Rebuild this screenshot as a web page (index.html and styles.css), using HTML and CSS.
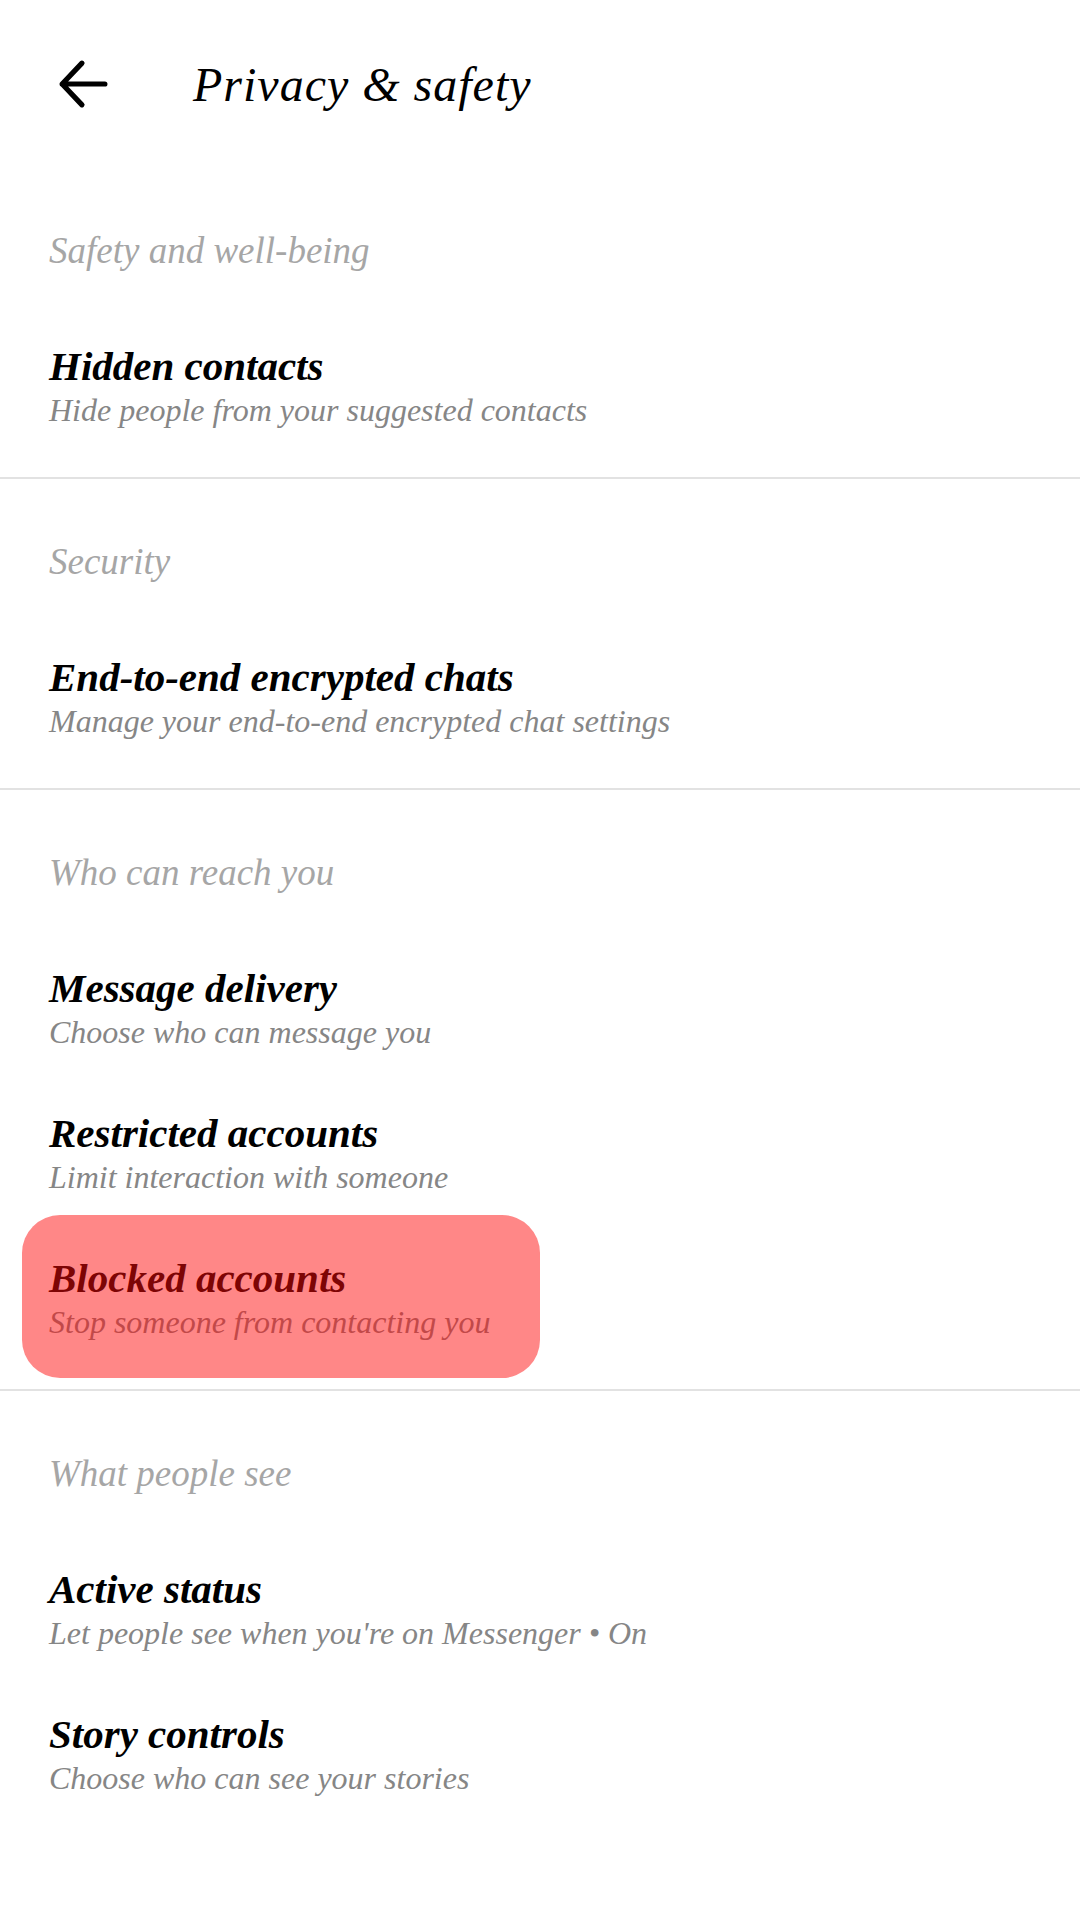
FILE: index.html
```html
<!DOCTYPE html>
<html lang="en">
<head>
    <meta charset="UTF-8">
    <meta name="viewport" content="width=device-width, initial-scale=1.0">
    <title>Privacy &amp; safety</title>
    <link rel="stylesheet" href="styles.css">
</head>
<body>
    <div class="topbar">
        <svg class="back" viewBox="0 0 48 48" width="50" height="50">
            <path d="M4 24 H45 M23 4 L4 24 L23 44" fill="none" stroke="#000" stroke-width="5" stroke-linecap="round" stroke-linejoin="round"/>
        </svg>
        <h1 class="title">Privacy &amp; safety</h1>
    </div>

    <div class="section">
        <div class="section-label">Safety and well-being</div>
        <div class="item">
            <div class="item-title">Hidden contacts</div>
            <div class="item-sub">Hide people from your suggested contacts</div>
        </div>
    </div>

    <div class="section">
        <div class="section-label">Security</div>
        <div class="item">
            <div class="item-title">End-to-end encrypted chats</div>
            <div class="item-sub">Manage your end-to-end encrypted chat settings</div>
        </div>
    </div>

    <div class="section">
        <div class="section-label">Who can reach you</div>
        <div class="item">
            <div class="item-title">Message delivery</div>
            <div class="item-sub">Choose who can message you</div>
        </div>
        <div class="item">
            <div class="item-title">Restricted accounts</div>
            <div class="item-sub">Limit interaction with someone</div>
        </div>
        <div class="item highlighted">
            <div class="item-title">Blocked accounts</div>
            <div class="item-sub">Stop someone from contacting you</div>
        </div>
    </div>

    <div class="section last">
        <div class="section-label">What people see</div>
        <div class="item">
            <div class="item-title">Active status</div>
            <div class="item-sub">Let people see when you're on Messenger &bull; On</div>
        </div>
        <div class="item">
            <div class="item-title">Story controls</div>
            <div class="item-sub">Choose who can see your stories</div>
        </div>
    </div>
</body>
</html>
```

FILE: styles.css
```css
body {
    margin: 0;
    background: #fff;
    font-family: "Liberation Serif", "Times New Roman", serif;
    font-style: italic;
    color: #000;
}

.topbar {
    height: 168px;
    display: flex;
    align-items: center;
    padding-left: 58px;
}

.back {
    display: block;
}

.title {
    margin: 0 0 0 85px;
    font-size: 48px;
    font-weight: normal;
    letter-spacing: 1px;
}

.section {
    padding: 61px 0 17px;
    border-bottom: 2px solid #e2e2e2;
}

.section.last {
    border-bottom: none;
}

.section-label {
    padding-left: 49px;
    font-size: 37px;
    line-height: 44px;
    color: #a6a6a6;
    margin-bottom: 42px;
}

.item {
    position: relative;
    height: 145px;
    display: flex;
    flex-direction: column;
    justify-content: center;
    padding-left: 49px;
}

.item-title {
    font-size: 41px;
    line-height: 44px;
    font-weight: bold;
}

.item-sub {
    font-size: 32px;
    line-height: 44px;
    color: #868686;
}

/* red marker drawn over the blocked accounts row */
.highlighted::after {
    content: "";
    position: absolute;
    left: 22px;
    top: -12px;
    width: 518px;
    height: 163px;
    border-radius: 38px;
    background: rgba(255, 10, 10, 0.49);
    pointer-events: none;
}
```
